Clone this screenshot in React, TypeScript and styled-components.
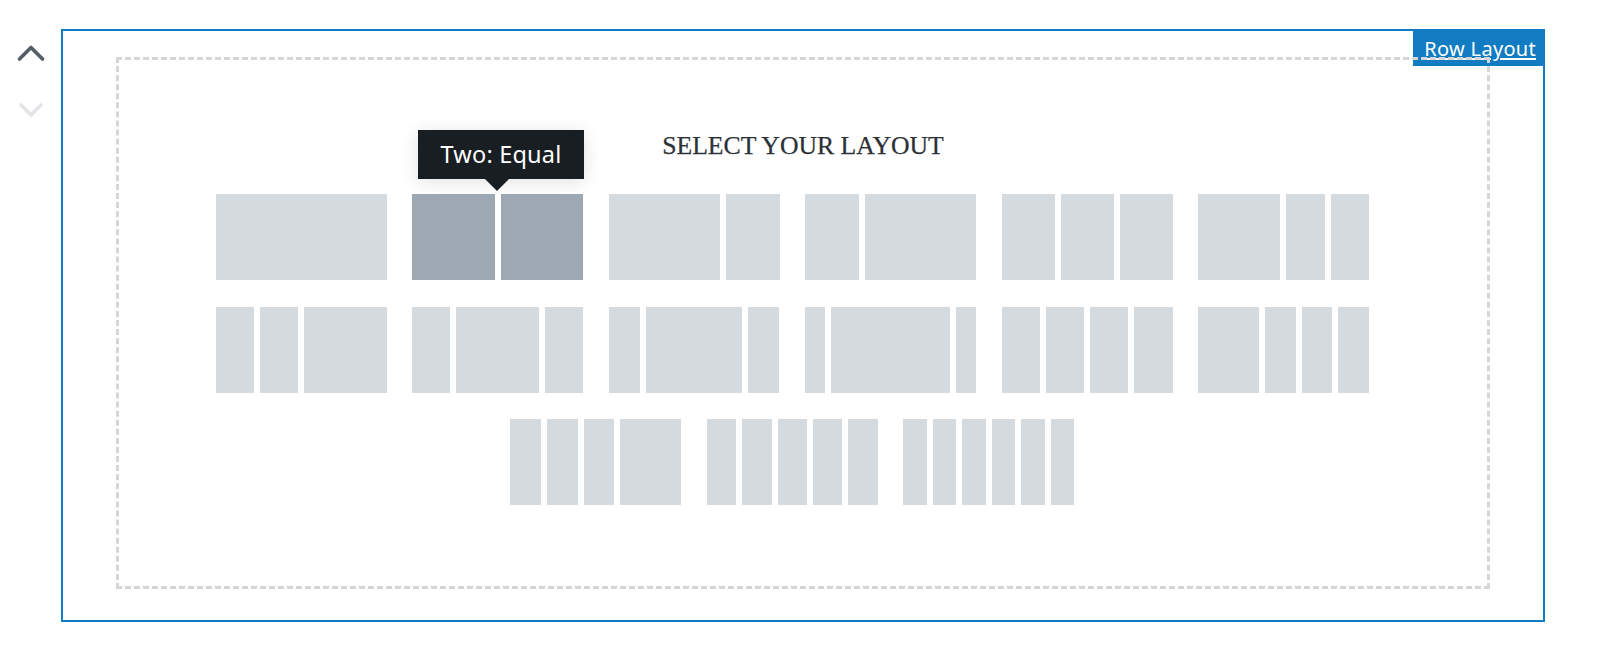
import styled, { createGlobalStyle } from "styled-components";
import { useState } from "react";

const GlobalStyle = createGlobalStyle`
  body {
    margin: 0;
    background: #ffffff;
    font-family: "Noto Sans", "Liberation Sans", sans-serif;
  }
`;

const Page = styled.div`
  display: flex;
  padding-top: 29px;
`;

const Mover = styled.div`
  width: 61px;
  display: flex;
  flex-direction: column;
  align-items: center;
  padding-top: 15px;
  gap: 39px;
`;

const MoverButton = styled.svg<{ $disabled?: boolean }>`
  display: block;
  width: 30px;
  height: 18px;
  stroke: ${(p) => (p.$disabled ? "#e2e4e7" : "#555d66")};
  stroke-width: 3.6;
  fill: none;
  stroke-linecap: round;
  stroke-linejoin: round;
`;

const Block = styled.div`
  position: relative;
  box-sizing: border-box;
  width: 1484px;
  height: 593px;
  border: 2px solid #117cc1;
  padding: 26px 53px 31px 53px;
`;

const BlockLabel = styled.div`
  position: absolute;
  top: -2px;
  right: -2px;
  z-index: 0;
  box-sizing: border-box;
  height: 37px;
  padding: 2px 9px 0 11px;
  background: #117cc1;
  color: #ffffff;
  font-size: 20px;
  letter-spacing: 0.3px;
  line-height: 35px;
  text-decoration: underline;
  text-underline-offset: 2px;
`;

const Placeholder = styled.div`
  position: relative;
  z-index: 1;
  box-sizing: border-box;
  height: 100%;
  border: 3px dashed #d6d6d6;
  display: flex;
  flex-direction: column;
  align-items: center;
  padding-top: 71px;
`;

const Title = styled.h2`
  margin: 0;
  font-family: "Liberation Serif", "DejaVu Serif", serif;
  font-weight: normal;
  font-size: 25.7px;
  line-height: 30px;
  color: #2c3136;
  -webkit-text-stroke: 0.25px #2c3136;
`;

const LayoutList = styled.div`
  width: 1179px;
  margin-top: 33px;
  padding-left: 4px;
  display: flex;
  flex-wrap: wrap;
  justify-content: center;
`;

const LayoutTile = styled.div<{ $cols: string }>`
  position: relative;
  width: 171px;
  height: 86px;
  margin: 0 25.5px 26.5px 0;
  display: grid;
  grid-template-columns: ${(p) => p.$cols};
  column-gap: 6px;
  cursor: pointer;
`;

const Column = styled.div<{ $active: boolean }>`
  background: ${(p) => (p.$active ? "#9da8b3" : "#d5dadf")};
`;

const Tooltip = styled.div`
  position: absolute;
  bottom: calc(100% + 15.5px);
  left: 50%;
  transform: translateX(calc(-50% + 3.5px));
  white-space: nowrap;
  box-sizing: border-box;
  height: 48.5px;
  padding: 0 23px;
  background: #191e23;
  color: #ffffff;
  font-size: 23.5px;
  letter-spacing: 0.2px;
  line-height: 48px;
  box-shadow: 0 3px 18px rgba(0, 0, 0, 0.12);
  z-index: 2;

  &::after {
    content: "";
    position: absolute;
    top: 100%;
    left: calc(50% - 3.5px);
    transform: translateX(-50%);
    border-left: 12px solid transparent;
    border-right: 12px solid transparent;
    border-top: 12px solid #191e23;
  }
`;

const layouts = [
  { name: "One: Row", cols: [1] },
  { name: "Two: Equal", cols: [1, 1] },
  { name: "Two: Left Heavy 66/33", cols: [112, 54] },
  { name: "Two: Right Heavy 33/66", cols: [54, 111] },
  { name: "Three: Equal", cols: [1, 1, 1] },
  { name: "Three: Left Heavy 50/25/25", cols: [83, 38.7, 38.3] },
  { name: "Three: Right Heavy 25/25/50", cols: [38.3, 38, 83] },
  { name: "Three: Center Heavy 25/50/25", cols: [38, 83, 38.5] },
  { name: "Three: Center Wide 20/60/20", cols: [32, 97.7, 32] },
  { name: "Three: Center Wider 15/70/15", cols: [20, 119, 20] },
  { name: "Four: Equal", cols: [1, 1, 1, 1] },
  { name: "Four: Left Heavy 40/20/20/20", cols: [61.3, 31, 31, 31] },
  { name: "Four: Right Heavy 20/20/20/40", cols: [31, 31, 30.4, 61.6] },
  { name: "Five: Equal", cols: [1, 1, 1, 1, 1] },
  { name: "Six: Equal", cols: [1, 1, 1, 1, 1, 1] },
];

function App() {
  const [hovered, setHovered] = useState<number | null>(1);

  return (
    <>
      <GlobalStyle />
      <Page>
        <Mover>
          <MoverButton viewBox="0 0 30 18">
            <polyline points="3.5,15 15,3.5 26.5,15" />
          </MoverButton>
          <MoverButton viewBox="0 0 30 18" $disabled>
            <polyline points="5,4 15,14 25,4" />
          </MoverButton>
        </Mover>

        <Block>
          <BlockLabel>Row Layout</BlockLabel>
          <Placeholder>
            <Title>SELECT YOUR LAYOUT</Title>
            <LayoutList>
              {layouts.map((l, i) => (
                <LayoutTile
                  key={l.name}
                  $cols={l.cols.map((c) => `${c}fr`).join(" ")}
                  onMouseEnter={() => setHovered(i)}
                  onMouseLeave={() => setHovered(null)}
                >
                  {l.cols.map((_, j) => (
                    <Column key={j} $active={hovered === i} />
                  ))}
                  {hovered === i ? <Tooltip>{l.name}</Tooltip> : null}
                </LayoutTile>
              ))}
            </LayoutList>
          </Placeholder>
        </Block>
      </Page>
    </>
  );
}

export default App;
